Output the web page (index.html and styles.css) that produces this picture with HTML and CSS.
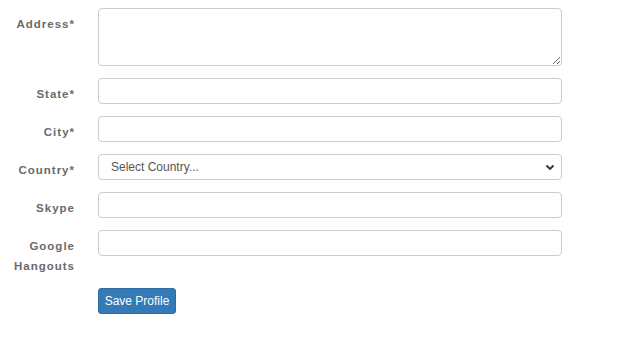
FILE: index.html
```html
<!DOCTYPE html>
<html>
<head>
<meta charset="utf-8">
<link rel="stylesheet" href="styles.css">
</head>
<body>
<form class="form">
  <div class="row row-area">
    <label class="lbl">Address*</label>
    <textarea class="ctrl area"></textarea>
  </div>
  <div class="row">
    <label class="lbl">State*</label>
    <input class="ctrl" type="text">
  </div>
  <div class="row">
    <label class="lbl">City*</label>
    <input class="ctrl" type="text">
  </div>
  <div class="row">
    <label class="lbl">Country*</label>
    <div class="select">
      <span class="select-text">Select Country...</span>
      <svg class="chev" width="10" height="7" viewBox="0 0 10 7"><path d="M1.5 1.5 L5 5 L8.5 1.5" fill="none" stroke="#333" stroke-width="1.8"/></svg>
    </div>
  </div>
  <div class="row">
    <label class="lbl">Skype</label>
    <input class="ctrl" type="text">
  </div>
  <div class="row">
    <label class="lbl">Google<br>Hangouts</label>
    <input class="ctrl" type="text">
  </div>
  <div class="row row-btn">
    <span></span>
    <button type="button" class="btn">Save Profile</button>
  </div>
</form>
</body>
</html>
```

FILE: styles.css
```css
html, body {
  margin: 0;
  padding: 0;
  background: #fff;
}
.form {
  display: flex;
  flex-direction: column;
  gap: 12px;
  padding-top: 8px;
}
.row {
  display: grid;
  grid-template-columns: 75px 464px;
  column-gap: 23px;
  align-items: start;
}
.lbl {
  text-align: right;
  font-family: "Liberation Sans", Arial, sans-serif;
  font-weight: bold;
  font-size: 11.5px;
  letter-spacing: 1px;
  line-height: 20px;
  color: #6a6a6a;
  padding-top: 6px;
}
.ctrl {
  box-sizing: border-box;
  width: 464px;
  height: 26px;
  margin: 0;
  border: 1px solid #ccc;
  border-radius: 4px;
  background: #fff;
  font-family: "Liberation Sans", Arial, sans-serif;
  font-size: 12px;
  padding: 4px 12px;
}
.area {
  height: 58px;
  resize: vertical;
  display: block;
}
.select {
  box-sizing: border-box;
  width: 464px;
  height: 26px;
  border: 1px solid #ccc;
  border-radius: 4px;
  display: flex;
  align-items: center;
  justify-content: space-between;
  padding: 0 6px 0 12px;
}
.select-text {
  font-family: "Liberation Sans", Arial, sans-serif;
  font-size: 12px;
  color: #555;
}
.row-btn {
  margin-top: 0;
}
.btn {
  width: 78px;
  height: 26px;
  box-sizing: border-box;
  background: #337ab7;
  border: 1px solid #2e6da4;
  border-radius: 3px;
  color: #fff;
  font-family: "Liberation Sans", Arial, sans-serif;
  font-size: 12px;
  padding: 0;
}
```
